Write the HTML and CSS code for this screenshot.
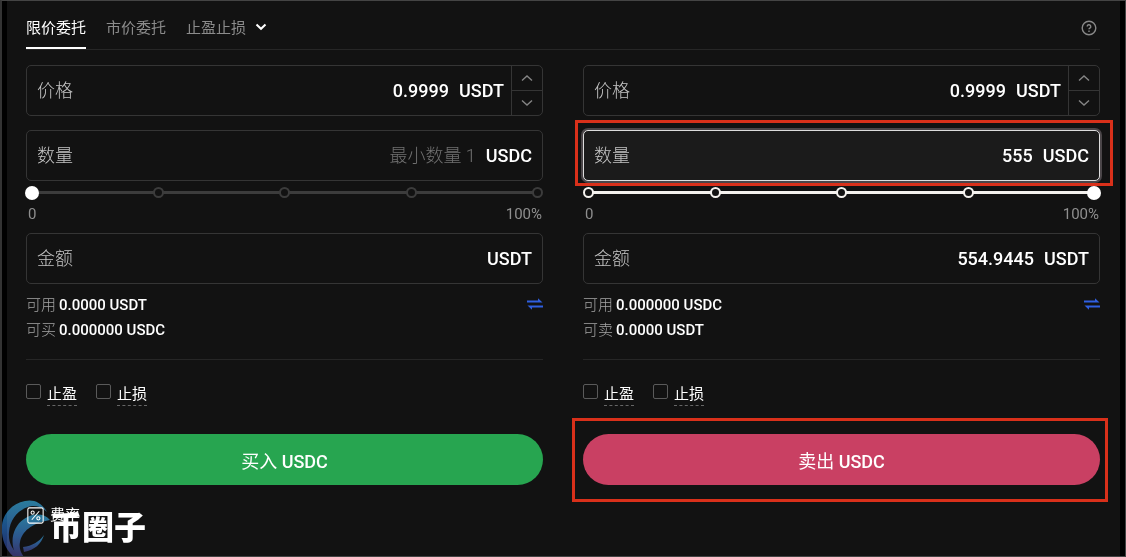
FILE: index.html
```html
<!DOCTYPE html>
<html lang="zh-CN">
<head>
<meta charset="utf-8">
<meta name="viewport" content="width=device-width, initial-scale=1">
<title>限价委托</title>
<link rel="stylesheet" href="styles.css">
</head>
<body>
<main class="panel">
  <nav class="tabs">
    <button class="tab tab-active" type="button">限价委托</button>
    <button class="tab" type="button">市价委托</button>
    <button class="tab tab-menu" type="button">止盈止损
      <svg class="caret" viewBox="0 0 12 8" aria-hidden="true"><path d="M1.5 1.5 6 5.8 10.500 1.500"/></svg>
    </button>
    <button class="help" type="button" aria-label="帮助">
      <svg viewBox="0 0 16 16" aria-hidden="true"><circle cx="8" cy="8" r="6.800"/><path d="M6.200 6.600a1.800 1.800 0 1 1 2.700 1.500c-.6.350-.9.600-.9 1.200M8 10.600v1.300"/></svg>
    </button>
  </nav>

  <div class="columns">
    <form class="order">
      <div class="field">
        <label for="buy-price">价格</label>
        <input id="buy-price" type="text" value="0.9999">
        <span class="unit">USDT</span>
        <span class="stepper">
          <button type="button" aria-label="增加"><svg viewBox="0 0 12 8"><path d="M1 6.500 6 2l5 4.500"/></svg></button>
          <button type="button" aria-label="减少"><svg viewBox="0 0 12 8"><path d="M1 1.500 6 6l5-4.500"/></svg></button>
        </span>
      </div>
      <div class="field">
        <label for="buy-qty">数量</label>
        <input id="buy-qty" type="text" placeholder="最小数量 1">
        <span class="unit">USDC</span>
      </div>
      <div class="slider">
        <div class="marks"><i></i><i></i><i></i><i></i><i></i></div>
        <input type="range" min="0" max="100" value="0" aria-label="买入比例">
      </div>
      <div class="scale"><span>0</span><span>100%</span></div>
      <div class="field">
        <label for="buy-total">金额</label>
        <input id="buy-total" type="text">
        <span class="unit">USDT</span>
      </div>
      <div class="balance">
        <dl>
          <div><dt>可用</dt><dd>0.0000 USDT</dd></div>
          <div><dt>可买</dt><dd>0.000000 USDC</dd></div>
        </dl>
        <button class="swap" type="button" aria-label="划转"><svg viewBox="0 0 16 12"><path d="M0 4.500h15.500L11 .2v2.300H0zM16 7.500H.5L5 11.800V9.500h11z"/></svg></button>
      </div>
      <div class="options">
        <label><input type="checkbox"><span>止盈</span></label>
        <label><input type="checkbox"><span>止损</span></label>
      </div>
      <div class="action"><button class="submit buy" type="submit">买入 <b>USDC</b></button></div>
    </form>

    <form class="order">
      <div class="field">
        <label for="sell-price">价格</label>
        <input id="sell-price" type="text" value="0.9999">
        <span class="unit">USDT</span>
        <span class="stepper">
          <button type="button" aria-label="增加"><svg viewBox="0 0 12 8"><path d="M1 6.500 6 2l5 4.500"/></svg></button>
          <button type="button" aria-label="减少"><svg viewBox="0 0 12 8"><path d="M1 1.500 6 6l5-4.500"/></svg></button>
        </span>
      </div>
      <div class="field field-focus">
        <label for="sell-qty">数量</label>
        <input id="sell-qty" type="text" value="555">
        <span class="unit">USDC</span>
        <span class="highlight highlight-field"></span>
      </div>
      <div class="slider slider-full">
        <div class="marks"><i></i><i></i><i></i><i></i><i></i></div>
        <input type="range" min="0" max="100" value="100" aria-label="卖出比例">
      </div>
      <div class="scale"><span>0</span><span>100%</span></div>
      <div class="field">
        <label for="sell-total">金额</label>
        <input id="sell-total" type="text" value="554.9445">
        <span class="unit">USDT</span>
      </div>
      <div class="balance">
        <dl>
          <div><dt>可用</dt><dd>0.000000 USDC</dd></div>
          <div><dt>可卖</dt><dd>0.0000 USDT</dd></div>
        </dl>
        <button class="swap" type="button" aria-label="划转"><svg viewBox="0 0 16 12"><path d="M0 4.500h15.500L11 .2v2.300H0zM16 7.500H.5L5 11.800V9.500h11z"/></svg></button>
      </div>
      <div class="options">
        <label><input type="checkbox"><span>止盈</span></label>
        <label><input type="checkbox"><span>止损</span></label>
      </div>
      <div class="action"><button class="submit sell" type="submit">卖出 <b>USDC</b></button><span class="highlight highlight-button"></span></div>
    </form>
  </div>

  <a class="fee" href="#">
    <svg viewBox="0 0 16 16" aria-hidden="true"><rect x=".8" y=".8" width="14.400" height="14.400" rx="1.500"/><path d="M11.500 4 4.500 12"/><circle cx="5.300" cy="5.300" r="1.500"/><circle cx="10.700" cy="10.700" r="1.500"/></svg>
    <span>费率</span>
  </a>
</main>
<div class="watermark">
  <svg viewBox="0 0 50 57" aria-hidden="true">
    <defs><linearGradient id="swirl" x1="0" y1="0" x2="0" y2="1"><stop offset="0" stop-color="#1a7296"/><stop offset=".5" stop-color="#1c4c86"/><stop offset="1" stop-color="#26235c"/></linearGradient></defs>
    <path fill="url(#swirl)" d="M47 12C42 3 34-1 25 1 10 4 0 17 2 33c1 11 6 19 12 24h7C13 51 8 43 9 32 10 18 20 8 32 6c6-.5 11 2 15 6z"/>
    <path fill="url(#swirl)" d="M50 20C44 13 33 13 24 19 12 27 9 44 17 57h7c-4-5-5-10-4-15 2-10 11-19 30-22z"/>
    <path fill="url(#swirl)" d="M23 47c9-1 16-5 21-12-3 9-9 15-20 17z"/>
  </svg>
  <strong>币圈子</strong>
</div>
</body>
</html>
```

FILE: styles.css
```css
* {
  box-sizing: border-box;
}

body {
  margin: 0;
  min-height: 100vh;
  display: flex;
  position: relative;
  padding: 0 5px;
  background: #000;
  border: 1px solid #444;
  border-left: 2px solid #333;
  color: #fff;
  font-family: Roboto, "Noto Sans CJK SC", sans-serif;
  font-size: 15px;
}

button,
input {
  font: inherit;
  color: inherit;
}

button {
  padding: 0;
  border: 0;
  background: none;
  cursor: pointer;
}

svg {
  display: block;
  fill: none;
  stroke: currentColor;
}

.panel {
  flex: 1;
  min-width: 0;
  padding: 5px 20px 0 19px;
  background: #121212;
}

.tabs {
  display: flex;
  gap: 20px;
  height: 44px;
  border-bottom: 1px solid #262626;
}

.tab {
  height: 43px;
  color: #8c8c8c;
  border-bottom: 2px solid transparent;
}

.tab-active {
  color: #fff;
  border-color: #fff;
}

.tab-menu {
  display: flex;
  align-items: center;
  gap: 9px;
}

.caret {
  width: 12px;
  height: 8px;
  color: #fff;
  stroke-width: 2;
}

.help {
  margin-left: auto;
  padding: 0 3px;
  color: #888;
}

.help svg {
  width: 16px;
  height: 16px;
  stroke-width: 1.400;
}

.columns {
  display: grid;
  grid-template-columns: 1fr 1fr;
  gap: 40px;
  padding-top: 15px;
}

.order {
  min-width: 0;
}

.field {
  position: relative;
  display: flex;
  align-items: center;
  height: 51px;
  padding: 0 10px;
  border: 1px solid #353535;
  border-radius: 5px;
  font-size: 18px;
}

.field + .field {
  margin-top: 14px;
}

.field label {
  color: #c4c4c4;
  font-weight: 300;
  line-height: 24px;
}

.field input {
  flex: 1;
  min-width: 0;
  padding: 0;
  border: 0;
  outline: 0;
  background: none;
  font-weight: 500;
  text-align: right;
}

.field input::placeholder {
  color: #707070;
  font-weight: 300;
}

.unit {
  margin-left: 10px;
  font-weight: 500;
}

.field-focus {
  background: #1b1b1b;
  border-color: #ddd;
  box-shadow: 0 0 0 2px #4a4548;
}

.stepper {
  align-self: stretch;
  display: flex;
  flex-direction: column;
  width: 31px;
  margin: 0 -10px 0 7px;
  border-left: 1px solid #353535;
  color: #858585;
}

.stepper button {
  flex: 1;
  display: grid;
  place-items: center;
}

.stepper button + button {
  border-top: 1px solid #353535;
}

.stepper svg {
  width: 12px;
  height: 8px;
  stroke-width: 1.400;
}

.highlight {
  position: absolute;
  border: 3px solid #d9301a;
  pointer-events: none;
}

.highlight-field {
  inset: -11px -14px -6px -9px;
}

.highlight-button {
  inset: -16px -8px -17px -11px;
}

.slider {
  display: grid;
  align-items: center;
  height: 23px;
  color: #3c3c3c;
}

.slider-full {
  color: #f4f2ee;
}

.slider > * {
  grid-area: 1 / 1;
}

.marks {
  display: flex;
  justify-content: space-between;
  background: linear-gradient(currentColor, currentColor) center / calc(100% - 10px) 3px no-repeat;
}

.marks i {
  width: 11px;
  height: 11px;
  border: 2px solid currentColor;
  border-radius: 50%;
  background: #121212;
}

.slider input {
  appearance: none;
  height: 14px;
  margin: 0 -1px;
  background: none;
}

.slider input::-webkit-slider-thumb {
  appearance: none;
  width: 14px;
  height: 14px;
  border-radius: 50%;
  background: #fff;
}

.scale {
  display: flex;
  justify-content: space-between;
  height: 29px;
  padding: 0 1px 0 2px;
  color: #8f8f8f;
  line-height: 20px;
}

.balance {
  display: flex;
  justify-content: space-between;
  align-items: flex-start;
  padding: 9px 0 16px;
  border-bottom: 1px solid #262626;
}

.balance dl {
  margin: 0;
  line-height: 25px;
}

.balance dl div {
  display: flex;
  gap: 3px;
}

.balance dt {
  color: #a4a4a4;
  font-weight: 300;
}

.balance dd {
  margin: 0;
  font-weight: 500;
}

.swap {
  padding: 5px 0;
}

.swap svg {
  width: 16px;
  height: 12px;
  fill: #2f5fe0;
  stroke: none;
}

.options {
  display: flex;
  gap: 19px;
  padding: 24px 0 28px;
}

.options label {
  display: flex;
  gap: 6px;
  height: 22px;
}

.options input {
  appearance: none;
  width: 15px;
  height: 15px;
  margin: 0;
  border: 1px solid #5a5a5a;
  border-radius: 2px;
}

.options span {
  line-height: 20px;
  border-bottom: 1px dashed #666;
}

.action {
  position: relative;
}

.submit {
  display: block;
  width: 100%;
  height: 51px;
  border-radius: 26px;
  font-size: 18px;
}

.submit b {
  font-weight: 500;
}

.buy {
  background: #27a550;
}

.sell {
  background: #c94063;
}

.fee {
  display: inline-flex;
  align-items: center;
  gap: 6px;
  margin-top: 19px;
  padding-left: 1px;
  color: #fff;
  line-height: 22px;
  text-decoration: none;
}

.fee svg {
  width: 17px;
  height: 17px;
}

.watermark {
  position: absolute;
  left: -2px;
  bottom: -1px;
  display: flex;
  align-items: center;
  pointer-events: none;
}

.watermark svg {
  width: 50px;
  height: 57px;
  stroke: none;
  mix-blend-mode: screen;
}

.watermark strong {
  font-size: 32px;
  font-weight: 900;
  line-height: 57px;
}
```
